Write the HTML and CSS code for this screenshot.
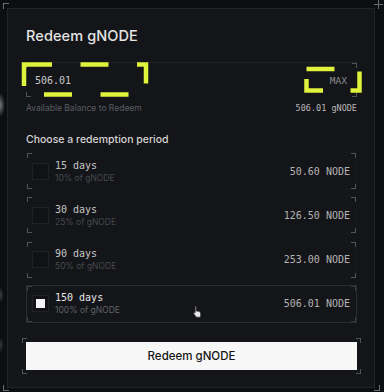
FILE: index.html
```html
<!DOCTYPE html>
<html lang="en">
<head>
<meta charset="utf-8">
<title>Redeem gNODE</title>
<link rel="stylesheet" href="styles.css">
</head>
<body>
  <span class="mark mark-tl"></span>
  <span class="mark mark-plus"></span>
  <span class="mark mark-bl"></span>
  <span class="mark mark-br"></span>

  <div class="dialog">
    <h1 class="title">Redeem gNODE</h1>

    <div class="field">
      <span class="brk"></span>
      <span class="field-value">506.01</span>
      <button class="max">MAX</button>
    </div>

    <div class="balance">
      <span class="balance-label">Available Balance to Redeem</span>
      <span class="balance-value">506.01 gNODE</span>
    </div>

    <p class="section">Choose a redemption period</p>

    <ul class="options">
      <li class="option">
        <span class="brk"></span>
        <span class="check"></span>
        <span class="label"><span class="days">15 days</span><span class="pct">10% of gNODE</span></span>
        <span class="amount">50.60 NODE</span>
      </li>
      <li class="option">
        <span class="brk"></span>
        <span class="check"></span>
        <span class="label"><span class="days">30 days</span><span class="pct">25% of gNODE</span></span>
        <span class="amount">126.50 NODE</span>
      </li>
      <li class="option">
        <span class="brk"></span>
        <span class="check"></span>
        <span class="label"><span class="days">90 days</span><span class="pct">50% of gNODE</span></span>
        <span class="amount">253.00 NODE</span>
      </li>
      <li class="option is-selected">
        <span class="brk"></span>
        <span class="check"><span class="check-dot"></span></span>
        <span class="label"><span class="days">150 days</span><span class="pct">100% of gNODE</span></span>
        <span class="amount">506.01 NODE</span>
      </li>
    </ul>

    <div class="redeem-wrap">
      <span class="brk brk-out"></span>
      <button class="redeem">Redeem gNODE</button>
    </div>
  </div>

  <svg class="hl hl-1" width="384" height="392" viewBox="0 0 384 392" aria-hidden="true">
    <rect x="24" y="64.5" width="122" height="30" fill="none" stroke="#dff23c" stroke-width="4.5" stroke-dasharray="28 28.5"/>
    <rect x="306.5" y="69" width="53" height="21.5" fill="none" stroke="#dff23c" stroke-width="4.5" stroke-dasharray="28 27.5"/>
  </svg>

  <svg class="cursor" width="12" height="14" viewBox="0 0 12 14" aria-hidden="true">
    <path d="M3.2 1.2c.6 0 1 .4 1 1V6l.3-.1c.5-.2 1 .1 1.1.5.4-.3 1-.2 1.3.2.4-.2 1-.1 1.2.4l.2.5c.4 1 .5 2.1.3 3.2l-.3 1.5H4.3L2 9.1c-.4-.5-.4-1.1 0-1.5.4-.3.9-.3 1.2 0V2.2c0-.6-.6-1 0-1z" fill="#e8e8e8" stroke="#333" stroke-width=".8" stroke-linejoin="round"/>
  </svg>
</body>
</html>
```

FILE: styles.css
```css
* { box-sizing: border-box; }

html, body {
  margin: 0;
  padding: 0;
}

body {
  position: relative;
  width: 384px;
  height: 392px;
  overflow: hidden;
  padding-top: 8px;
  background-color: #0d0e11;
  background-image:
    radial-gradient(ellipse 5px 12px at 0 105px, rgba(210,210,210,0.55), rgba(210,210,210,0) 100%),
    radial-gradient(ellipse 4px 8px at 0 295px, rgba(160,160,160,0.35), rgba(160,160,160,0) 100%),
    radial-gradient(ellipse 4px 8px at 0 345px, rgba(160,160,160,0.3), rgba(160,160,160,0) 100%);
  font-family: Inter, "Noto Sans", sans-serif;
  color: #d6d6d6;
}

/* viewport corner marks */
.mark {
  position: absolute;
  width: 6px;
  height: 6px;
  border-color: #6a6c70;
  border-style: solid;
  border-width: 0;
}
.mark-tl { left: 3px; top: 3px; border-left-width: 1px; border-top-width: 1px; }
.mark-bl { left: 3px; top: 385px; border-left-width: 1px; border-bottom-width: 1px; }
.mark-br { left: 374px; top: 385px; border-right-width: 1px; border-bottom-width: 1px; }
.mark-plus {
  left: 374px; top: 0px; width: 9px; height: 9px;
  background:
    linear-gradient(#6a6c70, #6a6c70) center / 1px 9px no-repeat,
    linear-gradient(#6a6c70, #6a6c70) center / 9px 1px no-repeat;
}

.dialog {
  position: relative;
  margin-left: 7px;
  width: 368px;
  height: 380px;
  border: 1px solid #222428;
  background: #141519;
  padding: 18px 17px 0 18px;
  display: flex;
  flex-direction: column;
}

.title {
  margin: 0;
  font-size: 14.5px;
  line-height: 18px;
  font-weight: 500;
  color: #e4e4e4;
  letter-spacing: 0.1px;
}

/* corner brackets */
.brk {
  position: absolute;
  inset: 0;
  pointer-events: none;
  --c: #505257;
  background:
    linear-gradient(var(--c), var(--c)) left top / 5px 1px no-repeat,
    linear-gradient(var(--c), var(--c)) left top / 1px 5px no-repeat,
    linear-gradient(var(--c), var(--c)) right top / 5px 1px no-repeat,
    linear-gradient(var(--c), var(--c)) right top / 1px 5px no-repeat,
    linear-gradient(var(--c), var(--c)) left bottom / 5px 1px no-repeat,
    linear-gradient(var(--c), var(--c)) left bottom / 1px 5px no-repeat,
    linear-gradient(var(--c), var(--c)) right bottom / 5px 1px no-repeat,
    linear-gradient(var(--c), var(--c)) right bottom / 1px 5px no-repeat;
}
.brk-out { inset: -4px; }

.field {
  position: relative;
  margin-top: 17px;
  height: 35px;
  border-top: 1px solid #1f2125;
  display: flex;
  align-items: center;
  justify-content: space-between;
  padding: 0 9px 0 9px;
}
.field-value {
  font-family: "DejaVu Sans Mono", "Liberation Mono", monospace;
  font-size: 10px;
  color: #c8c8c8;
}
.max {
  border: 0;
  background: none;
  padding: 0;
  font-family: "DejaVu Sans Mono", "Liberation Mono", monospace;
  font-size: 9.5px;
  color: #8a8c90;
  margin-right: 1px;
}

.balance {
  margin-top: 4px;
  height: 14px;
  display: flex;
  align-items: center;
  justify-content: space-between;
}
.balance-label {
  font-size: 8.5px;
  color: #5a5c61;
}
.balance-value {
  font-family: "DejaVu Sans Mono", "Liberation Mono", monospace;
  font-size: 8.5px;
  color: #b8b8b8;
}

.section {
  margin: 18px 0 0;
  font-size: 10.5px;
  line-height: 14px;
  font-weight: 500;
  color: #d4d4d4;
}

.options {
  list-style: none;
  margin: 5px 0 0;
  padding: 0;
  display: flex;
  flex-direction: column;
  gap: 6.3px;
}
.option {
  position: relative;
  height: 38px;
  border: 1px solid #17181c;
  display: flex;
  align-items: center;
  padding: 0 6px 0 5px;
}
.option.is-selected {
  border-color: #2a2c31;
}
.option.is-selected .brk { --c: #3a3c41; }

.check {
  width: 17px;
  height: 17px;
  border: 1px solid #1f2125;
  background: #111215;
  display: flex;
  align-items: center;
  justify-content: center;
  flex: none;
}
.check-dot {
  width: 9px;
  height: 9px;
  background: #f4f4f4;
}

.label {
  display: flex;
  flex-direction: column;
  margin-left: 6px;
  flex: 1;
  padding-top: 1px;
}
.days {
  font-family: "DejaVu Sans Mono", "Liberation Mono", monospace;
  font-size: 10px;
  line-height: 13px;
  color: #c4c4c4;
}
.pct {
  font-size: 8.5px;
  line-height: 13px;
  color: #46484d;
}
.is-selected .days { color: #e6e6e6; }
.is-selected .pct { color: #606266; }

.amount {
  font-family: "DejaVu Sans Mono", "Liberation Mono", monospace;
  font-size: 10px;
  color: #b4b4b4;
}

.redeem-wrap {
  position: relative;
  margin-top: 19px;
}
.redeem {
  display: block;
  width: 100%;
  height: 28px;
  border: 0;
  background: #f7f7f7;
  color: #141414;
  font-family: Inter, "Noto Sans", sans-serif;
  font-size: 11.5px;
  font-weight: 500;
}

.hl {
  position: absolute;
  left: 0;
  top: 0;
  pointer-events: none;
}
.cursor {
  position: absolute;
  left: 192px;
  top: 305px;
}
```
